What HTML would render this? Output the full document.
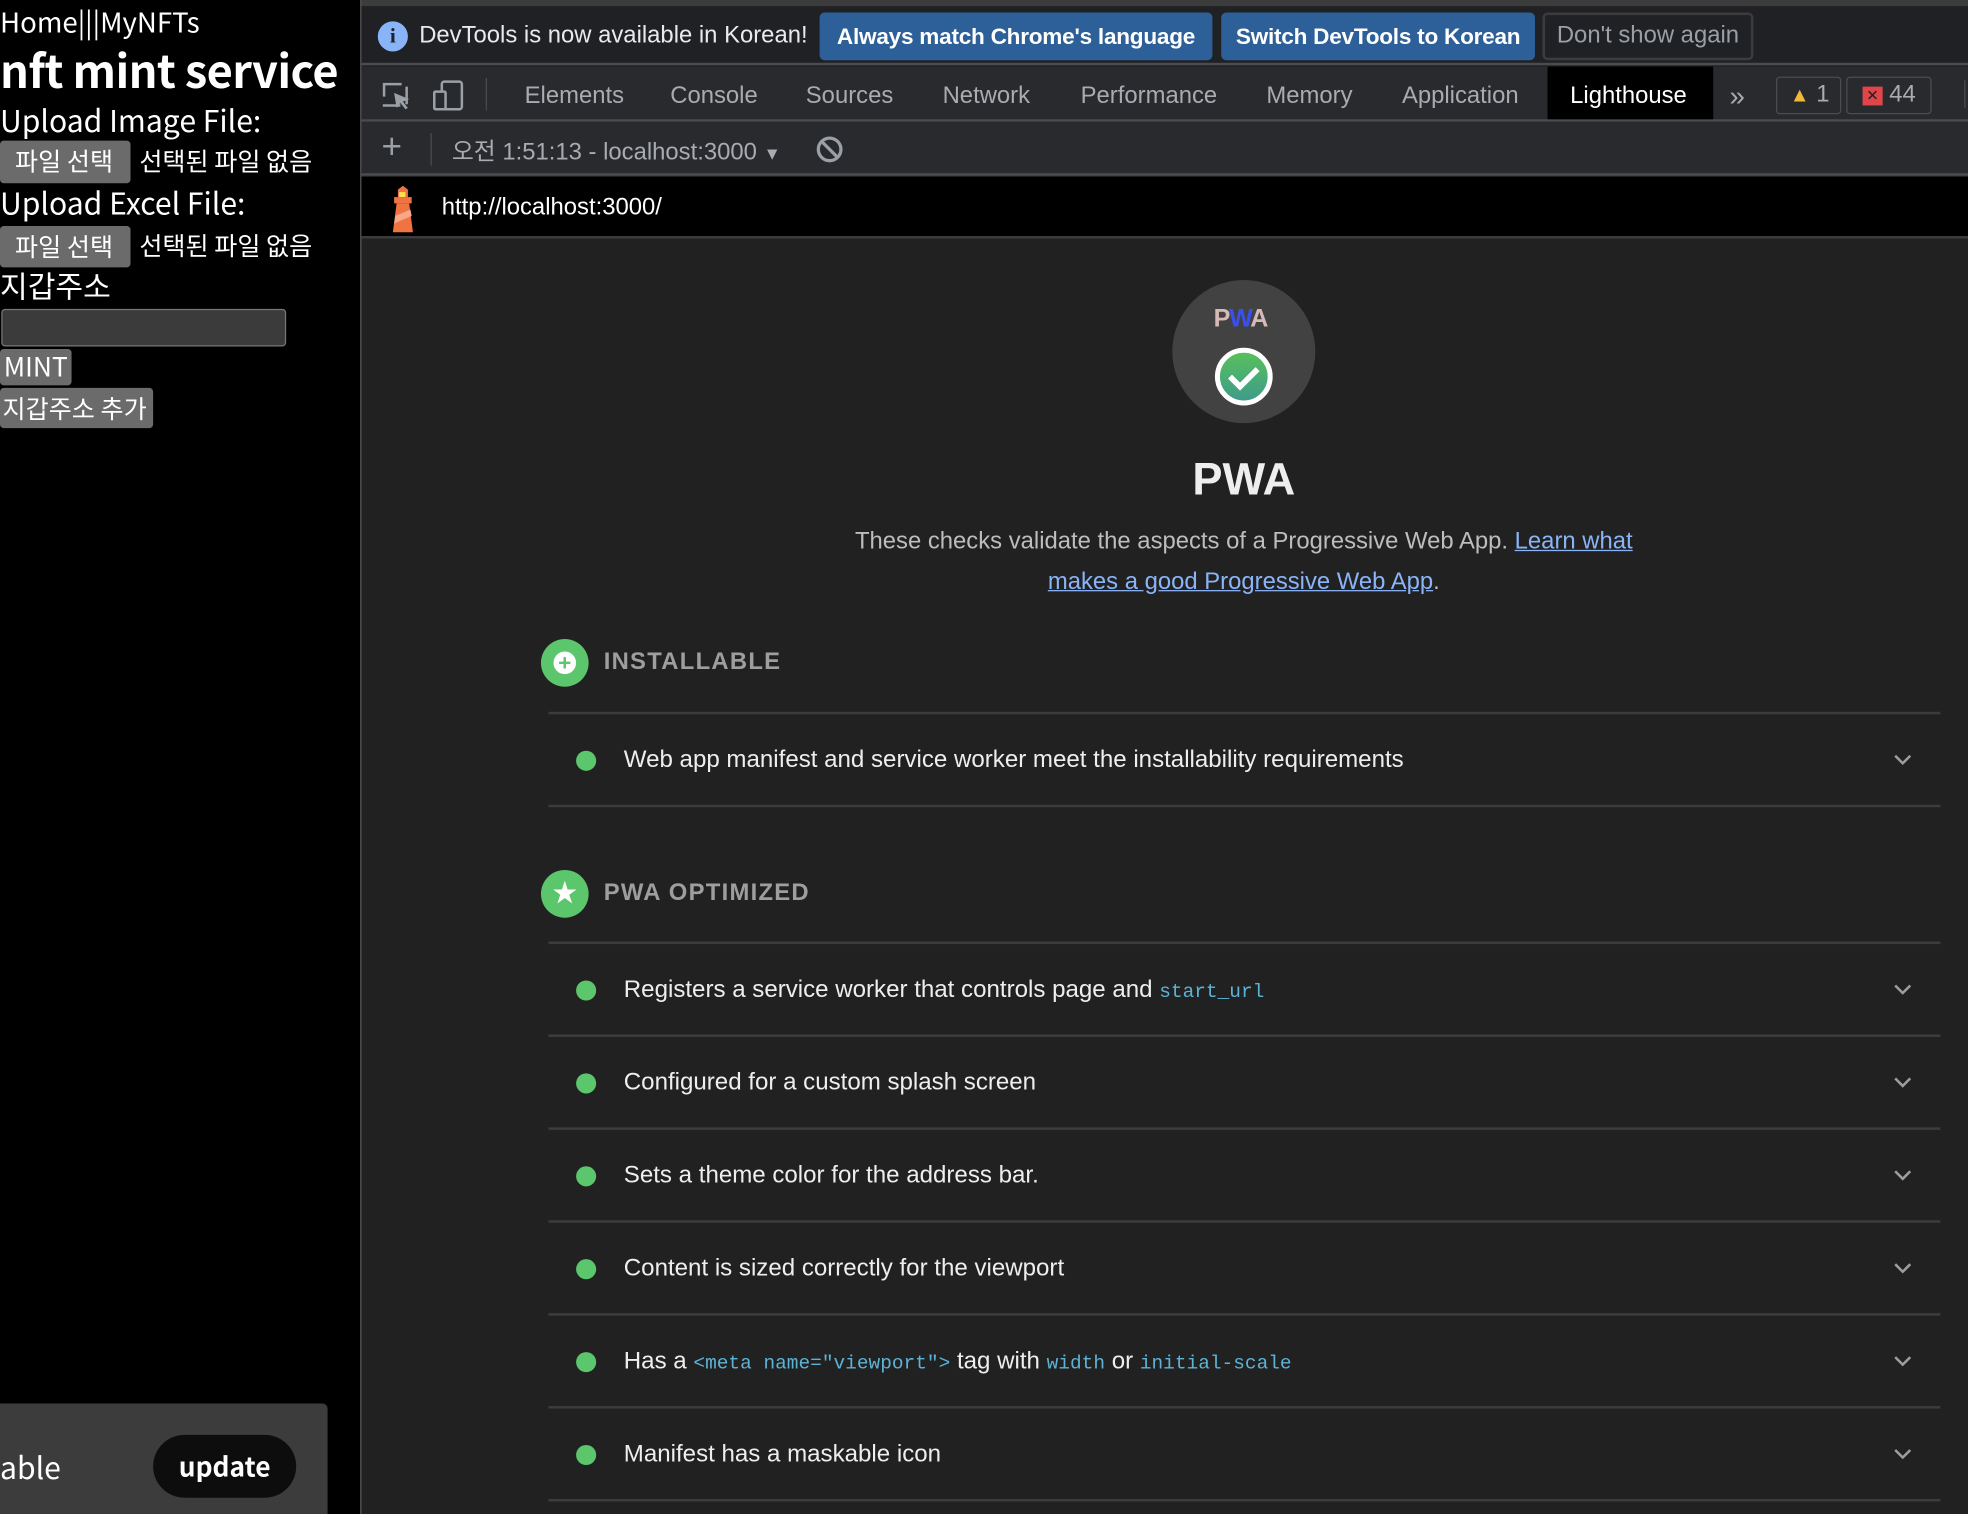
<!DOCTYPE html>
<html><head><meta charset="utf-8"><style>
*{margin:0;padding:0;box-sizing:border-box}
html,body{width:1968px;height:1514px;overflow:hidden;background:#212121}
#s{position:absolute;left:0;top:0;width:1568px;height:1206px;transform:scale(1.2551,1.2554);transform-origin:0 0;font-family:"Liberation Sans","Noto Sans CJK KR",sans-serif}
.a{position:absolute;white-space:nowrap}
#left{position:absolute;left:0;top:0;width:287px;height:1206px;background:#000;color:#fff;font-family:"Noto Sans CJK KR",sans-serif}
.btn{position:absolute;background:#6b6b6b;border-radius:3px;color:#fff;font-size:20px;line-height:32px;padding:0 3px}
#dt{position:absolute;left:287px;top:0;width:1281px;height:1206px;background:#212121;border-left:1px solid #555}
.tab{position:absolute;top:53px;height:43px;line-height:43px;color:#a8abb0;font-size:19px}
.row{position:absolute;left:149px;width:1109px;height:74px;border-bottom:2px solid #3c3c3c}
.row .d{position:absolute;left:22px;top:29px;width:16px;height:16px;border-radius:50%;background:#5bc66b}
.row .t{position:absolute;left:60px;top:26px;font-size:19.2px;color:#eee;white-space:nowrap}
.row .c{position:absolute;left:1071px;top:30px}
code{font-family:"Liberation Mono",monospace;font-size:15.5px;color:#5db3d6}
</style></head><body><div id="s">
<div id="left">
<div class="a" style="left:0;top:2px;font-size:22px;line-height:30px">Home|||MyNFTs</div>
<div class="a" style="left:0;top:32px;font-size:36px;line-height:46px;font-weight:bold;letter-spacing:-0.5px">nft mint service</div>
<div class="a" style="left:0;top:79px;font-size:24px;line-height:32px">Upload Image File:</div>
<div class="btn" style="left:0;top:112px;width:104px;height:34px;padding-left:12px">파일 선택</div>
<div class="a" style="left:111px;top:113px;font-size:20px;line-height:30px">선택된 파일 없음</div>
<div class="a" style="left:0;top:145px;font-size:24px;line-height:32px">Upload Excel File:</div>
<div class="btn" style="left:0;top:180px;width:104px;height:33px;padding-left:12px">파일 선택</div>
<div class="a" style="left:111px;top:180px;font-size:20px;line-height:30px">선택된 파일 없음</div>
<div class="a" style="left:0;top:211px;font-size:24px;line-height:32px">지갑주소</div>
<div class="a" style="left:1px;top:246px;width:227px;height:30px;background:#3b3b3b;border:1px solid #777;border-radius:3px"></div>
<div class="btn" style="left:0;top:278px;height:29px;line-height:29px;font-size:21px">MINT</div>
<div class="btn" style="left:0;top:309px;width:122px;height:32px;font-size:20px;padding:0 2px">지갑주소 추가</div>
<div class="a" style="left:0;top:1118px;width:261px;height:88px;background:#3c3c3c;border-radius:0 4px 0 0"></div>
<div class="a" style="left:0;top:1150px;font-size:24px">able</div>
<div class="a" style="left:122px;top:1143px;width:114px;height:50px;border-radius:25px;background:#0d0d0d;color:#fff;font-weight:bold;font-size:21px;text-align:center;line-height:50px">update</div>
</div>
<div id="dt">
<div class="a" style="left:0;top:0;width:1281px;height:5px;background:#3c3c3c"></div>
<div class="a" style="left:0;top:5px;width:1281px;height:47px;background:#202124;border-bottom:2px solid #494c50"></div>
<div class="a" style="left:13px;top:17px;width:24px;height:24px;border-radius:50%;background:#8ab4f8;color:#202124;font:bold 17px/24px 'Liberation Serif';text-align:center">i</div>
<div class="a" style="left:46px;top:18px;font-size:19px;color:#e8eaed">DevTools is now available in Korean!</div>
<div class="a" style="left:365px;top:10px;width:313px;height:38px;background:#2d5f98;border-radius:4px;color:#fff;font-weight:bold;font-size:18px;line-height:38px;text-align:center;letter-spacing:-0.2px">Always match Chrome's language</div>
<div class="a" style="left:685px;top:10px;width:250px;height:38px;background:#2d5f98;border-radius:4px;color:#fff;font-weight:bold;font-size:18px;line-height:38px;text-align:center;letter-spacing:-0.2px">Switch DevTools to Korean</div>
<div class="a" style="left:941px;top:10px;width:168px;height:38px;border:2px solid #3c3c3c;border-radius:4px;color:#9aa0a6;font-size:19px;line-height:34px;text-align:center">Don't show again</div>
<div class="a" style="left:0;top:53px;width:1281px;height:44px;background:#292a2d;border-bottom:2px solid #494c50"></div>
<svg class="a" style="left:16px;top:63px" width="70" height="28"><rect x="2" y="4" width="18" height="17" fill="none" stroke="#9aa0a6" stroke-width="2" stroke-dasharray="14 6"/><path d="M10 11l12 5-5 2 4 5-2 1-4-5-3 4z" fill="#9aa0a6"/><rect x="48" y="2" width="16" height="22" rx="2" fill="none" stroke="#9aa0a6" stroke-width="2"/><rect x="42" y="10" width="9" height="14" rx="1" fill="#292a2d" stroke="#9aa0a6" stroke-width="2"/></svg>
<div class="a" style="left:99px;top:62px;width:1px;height:26px;background:#494c50"></div>
<div class="tab" style="left:130px;top:55px">Elements</div>
<div class="tab" style="left:246px;top:55px">Console</div>
<div class="tab" style="left:354px;top:55px">Sources</div>
<div class="tab" style="left:463px;top:55px">Network</div>
<div class="tab" style="left:573px;top:55px">Performance</div>
<div class="tab" style="left:721px;top:55px">Memory</div>
<div class="tab" style="left:829px;top:55px">Application</div>
<div class="a" style="left:945px;top:53px;width:132px;height:42px;background:#000"></div>
<div class="tab" style="left:963px;top:55px;color:#fff">Lighthouse</div>
<div class="tab" style="left:1090px;top:55px;font-size:22px">»</div>
<div class="a" style="left:1127px;top:61px;width:52px;height:30px;border:1.5px solid #494c50;border-radius:3px;color:#a8abb0;font-size:19px;line-height:27px;padding-left:10px"><span style="color:#f0b93a;font-size:16px">▲</span> 1</div>
<div class="a" style="left:1183px;top:61px;width:68px;height:30px;border:1.5px solid #494c50;border-radius:3px;color:#a8abb0;font-size:19px;line-height:27px;padding-left:12px"><span style="display:inline-block;width:16px;height:15px;background:#e0454a;color:#222;font-size:12px;line-height:15px;text-align:center;vertical-align:1px">✕</span> 44</div>
<div class="a" style="left:1277px;top:64px;width:1px;height:22px;background:#494c50"></div>
<div class="a" style="left:0;top:97px;width:1281px;height:43px;background:#292a2d;border-bottom:2px solid #494c50"></div>
<div class="a" style="left:16px;top:101px;font-size:28px;color:#9aa0a6;font-weight:300">+</div>
<div class="a" style="left:55px;top:106px;width:1px;height:26px;background:#494c50"></div>
<div class="a" style="left:72px;top:106px;font-size:19px;color:#a8abb0">오전 1:51:13 - localhost:3000 <span style="font-size:14px">▼</span></div>
<svg class="a" style="left:362px;top:108px" width="22" height="22"><circle cx="11" cy="11" r="9" fill="none" stroke="#9aa0a6" stroke-width="2.6"/><path d="M5 5l12 12" stroke="#9aa0a6" stroke-width="2.6"/></svg>
<div class="a" style="left:0;top:141px;width:1281px;height:49px;background:#000;border-bottom:2px solid #3c3c3c"></div>
<svg class="a" style="left:20px;top:145px" width="26" height="42"><path d="M9 6l4-3 4 3v6H9z" fill="#ef7441"/><rect x="10" y="8" width="5" height="4" fill="#ffe14d"/><rect x="6" y="12" width="14" height="5" fill="#ef7441"/><path d="M8 17h10l3 23H5z" fill="#ef7441"/><path d="M7 27l12-5 1 5-14 6z" fill="#f5a98a"/></svg>
<div class="a" style="left:64px;top:155px;font-size:19px;color:#fff">http://localhost:3000/</div>
<div class="a" style="left:646px;top:223px;width:114px;height:114px;border-radius:50%;background:#424242"></div>
<div class="a" style="left:679px;top:243px;font-size:20px;font-weight:bold;color:#d8b9b9;letter-spacing:-1px">P<span style="color:#3a4ff0">W</span>A</div>
<svg class="a" style="left:679px;top:276px" width="48" height="48"><defs><linearGradient id="g" x1="0" y1="0" x2="0" y2="1"><stop offset="0" stop-color="#5ac25a"/><stop offset="1" stop-color="#3c9a8c"/></linearGradient></defs><circle cx="24" cy="24" r="21" fill="url(#g)" stroke="#fff" stroke-width="4"/><path d="M13 24l8 8 14-14" fill="none" stroke="#fff" stroke-width="4.5"/></svg>
<div class="a" style="left:0;width:1406px;text-align:center;top:361px;font-size:36px;font-weight:bold;color:#eee">PWA</div>
<div class="a" style="left:0;width:1406px;text-align:center;top:416px;font-size:19px;color:#bdbdbd;line-height:32px;white-space:normal">These checks validate the aspects of a Progressive Web App. <u style="color:#8ab4f8">Learn what</u><br><u style="color:#8ab4f8">makes a good Progressive Web App</u>.</div>
<div class="a" style="left:143px;top:509px;width:38px;height:38px;border-radius:50%;background:#5bc66b"></div>
<div class="a" style="left:153px;top:519px;width:18px;height:18px;border-radius:50%;background:#fff;color:#5bc66b;font:bold 18px/18px 'Liberation Sans';text-align:center">+</div>
<div class="a" style="left:193px;top:517px;font-size:19px;font-weight:bold;color:#9e9e9e;letter-spacing:1px">INSTALLABLE</div>
<div class="a" style="left:149px;top:567px;width:1109px;height:2px;background:#3c3c3c"></div>
<div class="row" style="top:569px"><div class="d"></div><div class="t">Web app manifest and service worker meet the installability requirements</div><svg class="c" width="16" height="12"><path d="M2 3l6 6 6-6" fill="none" stroke="#9e9e9e" stroke-width="2"/></svg></div>
<div class="a" style="left:143px;top:693px;width:38px;height:38px;border-radius:50%;background:#5bc66b;color:#fff;font-size:20px;line-height:38px;text-align:center">★</div>
<div class="a" style="left:193px;top:701px;font-size:19px;font-weight:bold;color:#9e9e9e;letter-spacing:1px">PWA OPTIMIZED</div>
<div class="a" style="left:149px;top:750px;width:1109px;height:2px;background:#3c3c3c"></div>
<div class="row" style="top:752px"><div class="d"></div><div class="t">Registers a service worker that controls page and <code>start_url</code></div><svg class="c" width="16" height="12"><path d="M2 3l6 6 6-6" fill="none" stroke="#9e9e9e" stroke-width="2"/></svg></div>
<div class="row" style="top:826px"><div class="d"></div><div class="t">Configured for a custom splash screen</div><svg class="c" width="16" height="12"><path d="M2 3l6 6 6-6" fill="none" stroke="#9e9e9e" stroke-width="2"/></svg></div>
<div class="row" style="top:900px"><div class="d"></div><div class="t">Sets a theme color for the address bar.</div><svg class="c" width="16" height="12"><path d="M2 3l6 6 6-6" fill="none" stroke="#9e9e9e" stroke-width="2"/></svg></div>
<div class="row" style="top:974px"><div class="d"></div><div class="t">Content is sized correctly for the viewport</div><svg class="c" width="16" height="12"><path d="M2 3l6 6 6-6" fill="none" stroke="#9e9e9e" stroke-width="2"/></svg></div>
<div class="row" style="top:1048px"><div class="d"></div><div class="t">Has a <code>&lt;meta name="viewport"&gt;</code> tag with <code>width</code> or <code>initial-scale</code></div><svg class="c" width="16" height="12"><path d="M2 3l6 6 6-6" fill="none" stroke="#9e9e9e" stroke-width="2"/></svg></div>
<div class="row" style="top:1122px"><div class="d"></div><div class="t">Manifest has a maskable icon</div><svg class="c" width="16" height="12"><path d="M2 3l6 6 6-6" fill="none" stroke="#9e9e9e" stroke-width="2"/></svg></div>
</div>
</div></body></html>
